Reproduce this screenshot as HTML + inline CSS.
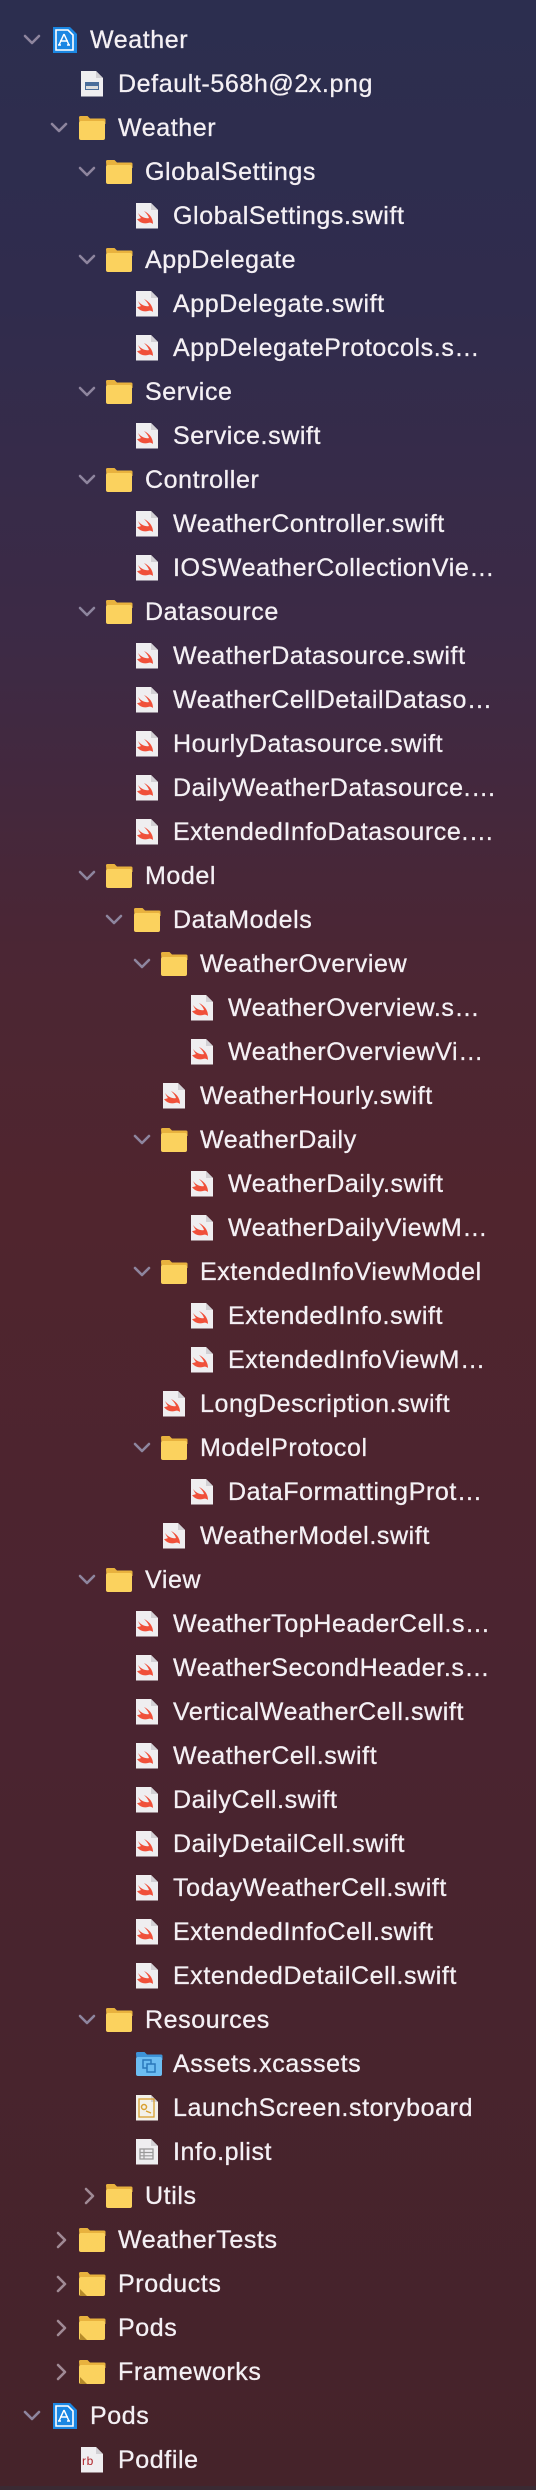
<!DOCTYPE html>
<html><head><meta charset="utf-8"><style>
html,body{margin:0;padding:0}
body{width:536px;height:2490px;overflow:hidden;position:relative;font-family:"Liberation Sans",sans-serif;
background:linear-gradient(180deg,#2c2e4f 0px,#302c4d 300px,#3d2a45 650px,#4b2634 950px,#50252e 1200px,#4a2430 1700px,#45232a 2490px);}
.list{position:absolute;top:18px;left:0;width:536px}
.r{position:relative;height:44px;color:#f4f0f4;font-size:25px;letter-spacing:0.6px;-webkit-text-stroke:0.3px #f4f0f4;white-space:nowrap}
.r span{position:absolute;top:8px;line-height:28px}
.r .c{position:absolute;top:13px;width:18px;height:18px}
.r .i{position:absolute;top:8px;width:28px;height:28px}
.bot{position:absolute;left:0;top:2486px;width:536px;height:4px;background:#3a2a33}
</style></head><body>
<svg width="0" height="0" style="position:absolute">
<defs>
<symbol id="dn" viewBox="0 0 18 18"><polyline points="2,5 9,12 16,5" fill="none" stroke="#8e859e" stroke-width="2.6" stroke-linecap="round" stroke-linejoin="round"/></symbol>
<symbol id="rt" viewBox="0 0 18 18"><polyline points="6,2 13,9 6,16" fill="none" stroke="#a08a95" stroke-width="2.6" stroke-linecap="round" stroke-linejoin="round"/></symbol>
<symbol id="fo" viewBox="0 0 28 28"><path d="M1 3.5q0-1.5 1.5-1.5h7l2.5 2.5h14q1.5 0 1.5 1.5v4h-26z" fill="#e8b23e"/><rect x="1" y="7" width="26" height="19" rx="2" fill="#fbd25e"/></symbol>
<symbol id="fc" viewBox="0 0 28 28"><path d="M1 3.5q0-1.5 1.5-1.5h7l2.5 2.5h14q1.5 0 1.5 1.5v4h-26z" fill="#e8b23e"/><rect x="1" y="7" width="26" height="19" rx="2" fill="#fbd25e"/><path d="M2 19l7 7h-7z" fill="#b58a2a"/></symbol>
<symbol id="sw" viewBox="0 0 28 28"><path d="M3 1h15l7 7v18.5h-22z" fill="#efeef0"/><path d="M18 1v7h7z" fill="#d2d0d4"/><path d="M5 11c3 4 8 6 11 5-1-3-3-5-5-7 4 2 7 5 8 8 1 2 1 5 1 5-1-1-3-2-5-1-4 1-8 0-11-4 2 0 4-1 4-1-1-1-2-3-3-5z" fill="#f0503a"/></symbol>
<symbol id="pj" viewBox="0 0 28 28"><path d="M2 1h17l7 7v19h-24z" fill="#1b87e3"/><path d="M5 4h12l5 5v15h-17z" fill="none" stroke="#fff" stroke-width="1.6"/><path d="M13 8l-5 11M13 8l5 11M9 15h8M7 19h3M16 19h3" stroke="#fff" stroke-width="1.5" fill="none"/></symbol>
<symbol id="pg" viewBox="0 0 28 28"><path d="M3 1h15l7 7v18.5h-22z" fill="#efeef0"/><path d="M18 1v7h7z" fill="#d2d0d4"/><rect x="7" y="12" width="14" height="8" fill="#4a6d9a"/><rect x="8" y="16" width="12" height="3" fill="#ddd"/></symbol>
<symbol id="as" viewBox="0 0 28 28"><path d="M1 3.5q0-1.5 1.5-1.5h7l2.5 2.5h14q1.5 0 1.5 1.5v4h-26z" fill="#3d93d8"/><rect x="1" y="7" width="26" height="19" rx="2" fill="#6cbdf2"/><rect x="8" y="10" width="8" height="8" fill="none" stroke="#2a78bb" stroke-width="1.5"/><rect x="12" y="14" width="8" height="8" fill="#6cbdf2" stroke="#2a78bb" stroke-width="1.5"/></symbol>
<symbol id="sb" viewBox="0 0 28 28"><path d="M3 1h15l7 7v18.5h-22z" fill="#f3f1ea"/><path d="M18 1v7h7z" fill="#d2d0d4"/><rect x="6" y="5" width="15" height="18" fill="none" stroke="#d9a030" stroke-width="1.3"/><circle cx="11" cy="13" r="2.5" fill="none" stroke="#d9a030" stroke-width="1.5"/><path d="M13 17l5 2" stroke="#d9a030" stroke-width="1.3"/></symbol>
<symbol id="pl" viewBox="0 0 28 28"><path d="M3 1h15l7 7v18.5h-22z" fill="#efeef0"/><path d="M18 1v7h7z" fill="#d2d0d4"/><rect x="7" y="11" width="13" height="10" fill="none" stroke="#999" stroke-width="1.3"/><path d="M7 14.5h13M7 17.8h13M11 11v10" stroke="#999" stroke-width="1.2"/></symbol>
<symbol id="rb" viewBox="0 0 28 28"><path d="M3 1h15l7 7v18.5h-22z" fill="#efeef0"/><path d="M18 1v7h7z" fill="#d2d0d4"/><text x="4" y="19" font-family="Liberation Sans,sans-serif" font-size="12" fill="#b0242a">rb</text></symbol>
</defs></svg>
<div class="list">
<div class="r"><svg class="c" style="left:23px"><use href="#dn"/></svg><svg class="i" style="left:51px"><use href="#pj"/></svg><span style="left:90px">Weather</span></div>
<div class="r"><svg class="i" style="left:78px"><use href="#pg"/></svg><span style="left:118px">Default-568h@2x.png</span></div>
<div class="r"><svg class="c" style="left:50px"><use href="#dn"/></svg><svg class="i" style="left:78px"><use href="#fo"/></svg><span style="left:118px">Weather</span></div>
<div class="r"><svg class="c" style="left:78px"><use href="#dn"/></svg><svg class="i" style="left:105px"><use href="#fo"/></svg><span style="left:145px">GlobalSettings</span></div>
<div class="r"><svg class="i" style="left:133px"><use href="#sw"/></svg><span style="left:173px">GlobalSettings.swift</span></div>
<div class="r"><svg class="c" style="left:78px"><use href="#dn"/></svg><svg class="i" style="left:105px"><use href="#fo"/></svg><span style="left:145px">AppDelegate</span></div>
<div class="r"><svg class="i" style="left:133px"><use href="#sw"/></svg><span style="left:173px">AppDelegate.swift</span></div>
<div class="r"><svg class="i" style="left:133px"><use href="#sw"/></svg><span style="left:173px">AppDelegateProtocols.s…</span></div>
<div class="r"><svg class="c" style="left:78px"><use href="#dn"/></svg><svg class="i" style="left:105px"><use href="#fo"/></svg><span style="left:145px">Service</span></div>
<div class="r"><svg class="i" style="left:133px"><use href="#sw"/></svg><span style="left:173px">Service.swift</span></div>
<div class="r"><svg class="c" style="left:78px"><use href="#dn"/></svg><svg class="i" style="left:105px"><use href="#fo"/></svg><span style="left:145px">Controller</span></div>
<div class="r"><svg class="i" style="left:133px"><use href="#sw"/></svg><span style="left:173px">WeatherController.swift</span></div>
<div class="r"><svg class="i" style="left:133px"><use href="#sw"/></svg><span style="left:173px">IOSWeatherCollectionVie…</span></div>
<div class="r"><svg class="c" style="left:78px"><use href="#dn"/></svg><svg class="i" style="left:105px"><use href="#fo"/></svg><span style="left:145px">Datasource</span></div>
<div class="r"><svg class="i" style="left:133px"><use href="#sw"/></svg><span style="left:173px">WeatherDatasource.swift</span></div>
<div class="r"><svg class="i" style="left:133px"><use href="#sw"/></svg><span style="left:173px">WeatherCellDetailDataso…</span></div>
<div class="r"><svg class="i" style="left:133px"><use href="#sw"/></svg><span style="left:173px">HourlyDatasource.swift</span></div>
<div class="r"><svg class="i" style="left:133px"><use href="#sw"/></svg><span style="left:173px">DailyWeatherDatasource.…</span></div>
<div class="r"><svg class="i" style="left:133px"><use href="#sw"/></svg><span style="left:173px">ExtendedInfoDatasource.…</span></div>
<div class="r"><svg class="c" style="left:78px"><use href="#dn"/></svg><svg class="i" style="left:105px"><use href="#fo"/></svg><span style="left:145px">Model</span></div>
<div class="r"><svg class="c" style="left:105px"><use href="#dn"/></svg><svg class="i" style="left:133px"><use href="#fo"/></svg><span style="left:173px">DataModels</span></div>
<div class="r"><svg class="c" style="left:133px"><use href="#dn"/></svg><svg class="i" style="left:160px"><use href="#fo"/></svg><span style="left:200px">WeatherOverview</span></div>
<div class="r"><svg class="i" style="left:188px"><use href="#sw"/></svg><span style="left:228px">WeatherOverview.s…</span></div>
<div class="r"><svg class="i" style="left:188px"><use href="#sw"/></svg><span style="left:228px">WeatherOverviewVi…</span></div>
<div class="r"><svg class="i" style="left:160px"><use href="#sw"/></svg><span style="left:200px">WeatherHourly.swift</span></div>
<div class="r"><svg class="c" style="left:133px"><use href="#dn"/></svg><svg class="i" style="left:160px"><use href="#fo"/></svg><span style="left:200px">WeatherDaily</span></div>
<div class="r"><svg class="i" style="left:188px"><use href="#sw"/></svg><span style="left:228px">WeatherDaily.swift</span></div>
<div class="r"><svg class="i" style="left:188px"><use href="#sw"/></svg><span style="left:228px">WeatherDailyViewM…</span></div>
<div class="r"><svg class="c" style="left:133px"><use href="#dn"/></svg><svg class="i" style="left:160px"><use href="#fo"/></svg><span style="left:200px">ExtendedInfoViewModel</span></div>
<div class="r"><svg class="i" style="left:188px"><use href="#sw"/></svg><span style="left:228px">ExtendedInfo.swift</span></div>
<div class="r"><svg class="i" style="left:188px"><use href="#sw"/></svg><span style="left:228px">ExtendedInfoViewM…</span></div>
<div class="r"><svg class="i" style="left:160px"><use href="#sw"/></svg><span style="left:200px">LongDescription.swift</span></div>
<div class="r"><svg class="c" style="left:133px"><use href="#dn"/></svg><svg class="i" style="left:160px"><use href="#fo"/></svg><span style="left:200px">ModelProtocol</span></div>
<div class="r"><svg class="i" style="left:188px"><use href="#sw"/></svg><span style="left:228px">DataFormattingProt…</span></div>
<div class="r"><svg class="i" style="left:160px"><use href="#sw"/></svg><span style="left:200px">WeatherModel.swift</span></div>
<div class="r"><svg class="c" style="left:78px"><use href="#dn"/></svg><svg class="i" style="left:105px"><use href="#fo"/></svg><span style="left:145px">View</span></div>
<div class="r"><svg class="i" style="left:133px"><use href="#sw"/></svg><span style="left:173px">WeatherTopHeaderCell.s…</span></div>
<div class="r"><svg class="i" style="left:133px"><use href="#sw"/></svg><span style="left:173px">WeatherSecondHeader.s…</span></div>
<div class="r"><svg class="i" style="left:133px"><use href="#sw"/></svg><span style="left:173px">VerticalWeatherCell.swift</span></div>
<div class="r"><svg class="i" style="left:133px"><use href="#sw"/></svg><span style="left:173px">WeatherCell.swift</span></div>
<div class="r"><svg class="i" style="left:133px"><use href="#sw"/></svg><span style="left:173px">DailyCell.swift</span></div>
<div class="r"><svg class="i" style="left:133px"><use href="#sw"/></svg><span style="left:173px">DailyDetailCell.swift</span></div>
<div class="r"><svg class="i" style="left:133px"><use href="#sw"/></svg><span style="left:173px">TodayWeatherCell.swift</span></div>
<div class="r"><svg class="i" style="left:133px"><use href="#sw"/></svg><span style="left:173px">ExtendedInfoCell.swift</span></div>
<div class="r"><svg class="i" style="left:133px"><use href="#sw"/></svg><span style="left:173px">ExtendedDetailCell.swift</span></div>
<div class="r"><svg class="c" style="left:78px"><use href="#dn"/></svg><svg class="i" style="left:105px"><use href="#fo"/></svg><span style="left:145px">Resources</span></div>
<div class="r"><svg class="i" style="left:135px"><use href="#as"/></svg><span style="left:173px">Assets.xcassets</span></div>
<div class="r"><svg class="i" style="left:133px"><use href="#sb"/></svg><span style="left:173px">LaunchScreen.storyboard</span></div>
<div class="r"><svg class="i" style="left:133px"><use href="#pl"/></svg><span style="left:173px">Info.plist</span></div>
<div class="r"><svg class="c" style="left:80px"><use href="#rt"/></svg><svg class="i" style="left:105px"><use href="#fo"/></svg><span style="left:145px">Utils</span></div>
<div class="r"><svg class="c" style="left:52px"><use href="#rt"/></svg><svg class="i" style="left:78px"><use href="#fo"/></svg><span style="left:118px">WeatherTests</span></div>
<div class="r"><svg class="c" style="left:52px"><use href="#rt"/></svg><svg class="i" style="left:78px"><use href="#fc"/></svg><span style="left:118px">Products</span></div>
<div class="r"><svg class="c" style="left:52px"><use href="#rt"/></svg><svg class="i" style="left:78px"><use href="#fc"/></svg><span style="left:118px">Pods</span></div>
<div class="r"><svg class="c" style="left:52px"><use href="#rt"/></svg><svg class="i" style="left:78px"><use href="#fc"/></svg><span style="left:118px">Frameworks</span></div>
<div class="r"><svg class="c" style="left:23px"><use href="#dn"/></svg><svg class="i" style="left:51px"><use href="#pj"/></svg><span style="left:90px">Pods</span></div>
<div class="r"><svg class="i" style="left:78px"><use href="#rb"/></svg><span style="left:118px">Podfile</span></div>
</div>
<div class="bot"></div>
</body></html>
